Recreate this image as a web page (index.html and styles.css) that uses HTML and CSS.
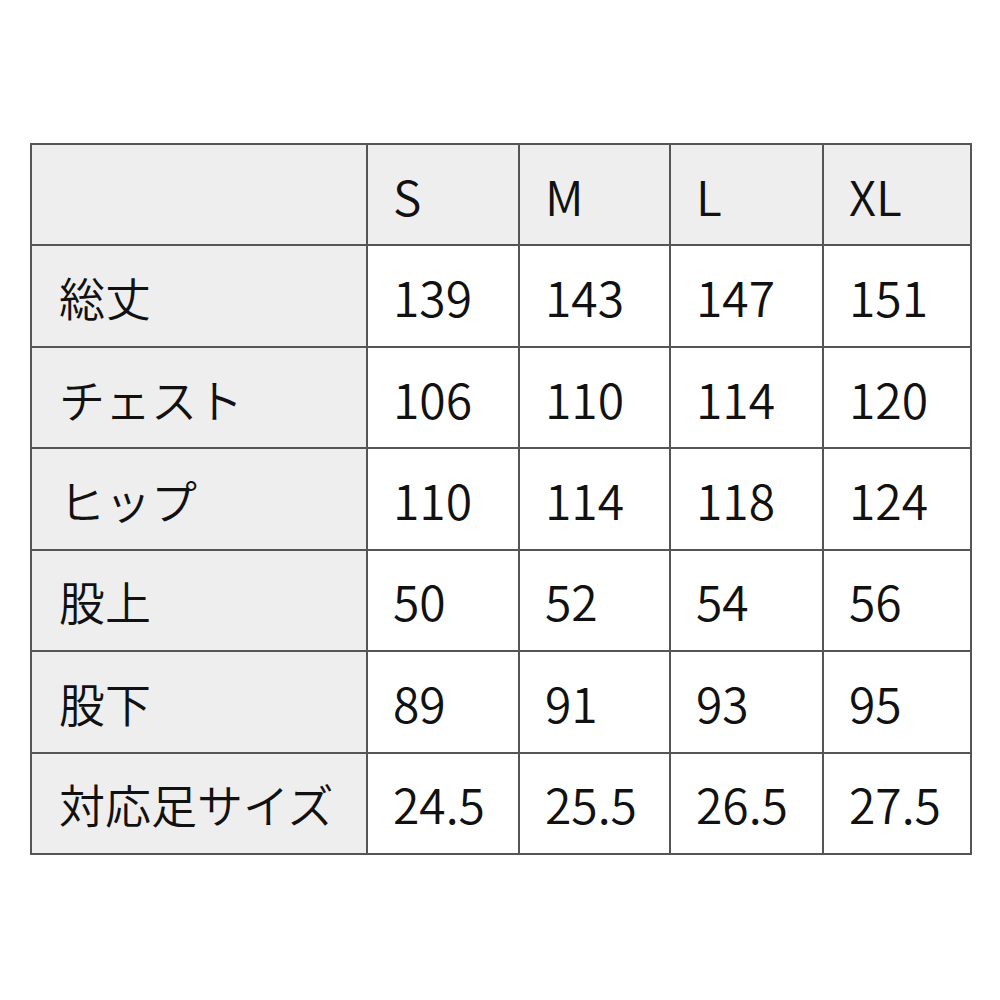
FILE: index.html
```html
<!DOCTYPE html>
<html lang="ja">
<head>
<meta charset="utf-8">
<link rel="stylesheet" href="styles.css">
</head>
<body>
<div class="size-table">
  <div class="cell head"></div>
  <div class="cell head">S</div>
  <div class="cell head">M</div>
  <div class="cell head">L</div>
  <div class="cell head">XL</div>

  <div class="cell head label">総丈</div>
  <div class="cell">139</div>
  <div class="cell">143</div>
  <div class="cell">147</div>
  <div class="cell">151</div>

  <div class="cell head label">チェスト</div>
  <div class="cell">106</div>
  <div class="cell">110</div>
  <div class="cell">114</div>
  <div class="cell">120</div>

  <div class="cell head label">ヒップ</div>
  <div class="cell">110</div>
  <div class="cell">114</div>
  <div class="cell">118</div>
  <div class="cell">124</div>

  <div class="cell head label">股上</div>
  <div class="cell">50</div>
  <div class="cell">52</div>
  <div class="cell">54</div>
  <div class="cell">56</div>

  <div class="cell head label">股下</div>
  <div class="cell">89</div>
  <div class="cell">91</div>
  <div class="cell">93</div>
  <div class="cell">95</div>

  <div class="cell head label">対応足サイズ</div>
  <div class="cell">24.5</div>
  <div class="cell">25.5</div>
  <div class="cell">26.5</div>
  <div class="cell">27.5</div>
</div>
</body>
</html>
```
FILE: styles.css
```css
html, body {
  margin: 0;
  padding: 0;
  background: #ffffff;
}
body {
  font-family: "Noto Sans CJK JP", "Noto Sans", sans-serif;
  color: #111111;
}
.size-table {
  margin: 143px 0 0 30px;
  width: 942px;
  height: 712px;
  box-sizing: border-box;
  display: grid;
  grid-template-columns: 334px 150px 149px 151px 146px;
  grid-template-rows: repeat(7, 1fr);
  gap: 2px;
  padding: 2px;
  background: #555555;
}
.cell {
  background: #ffffff;
  display: flex;
  align-items: center;
  padding-left: 25px;
  font-size: 48px;
  font-weight: 350;
  line-height: 1;
  box-sizing: border-box;
}
.head {
  background: #eeeeee;
}
.label {
  font-size: 46px;
  padding-left: 27px;
}
.size-table > .cell:nth-child(-n+5) {
  background: #eeeeee;
}
```
